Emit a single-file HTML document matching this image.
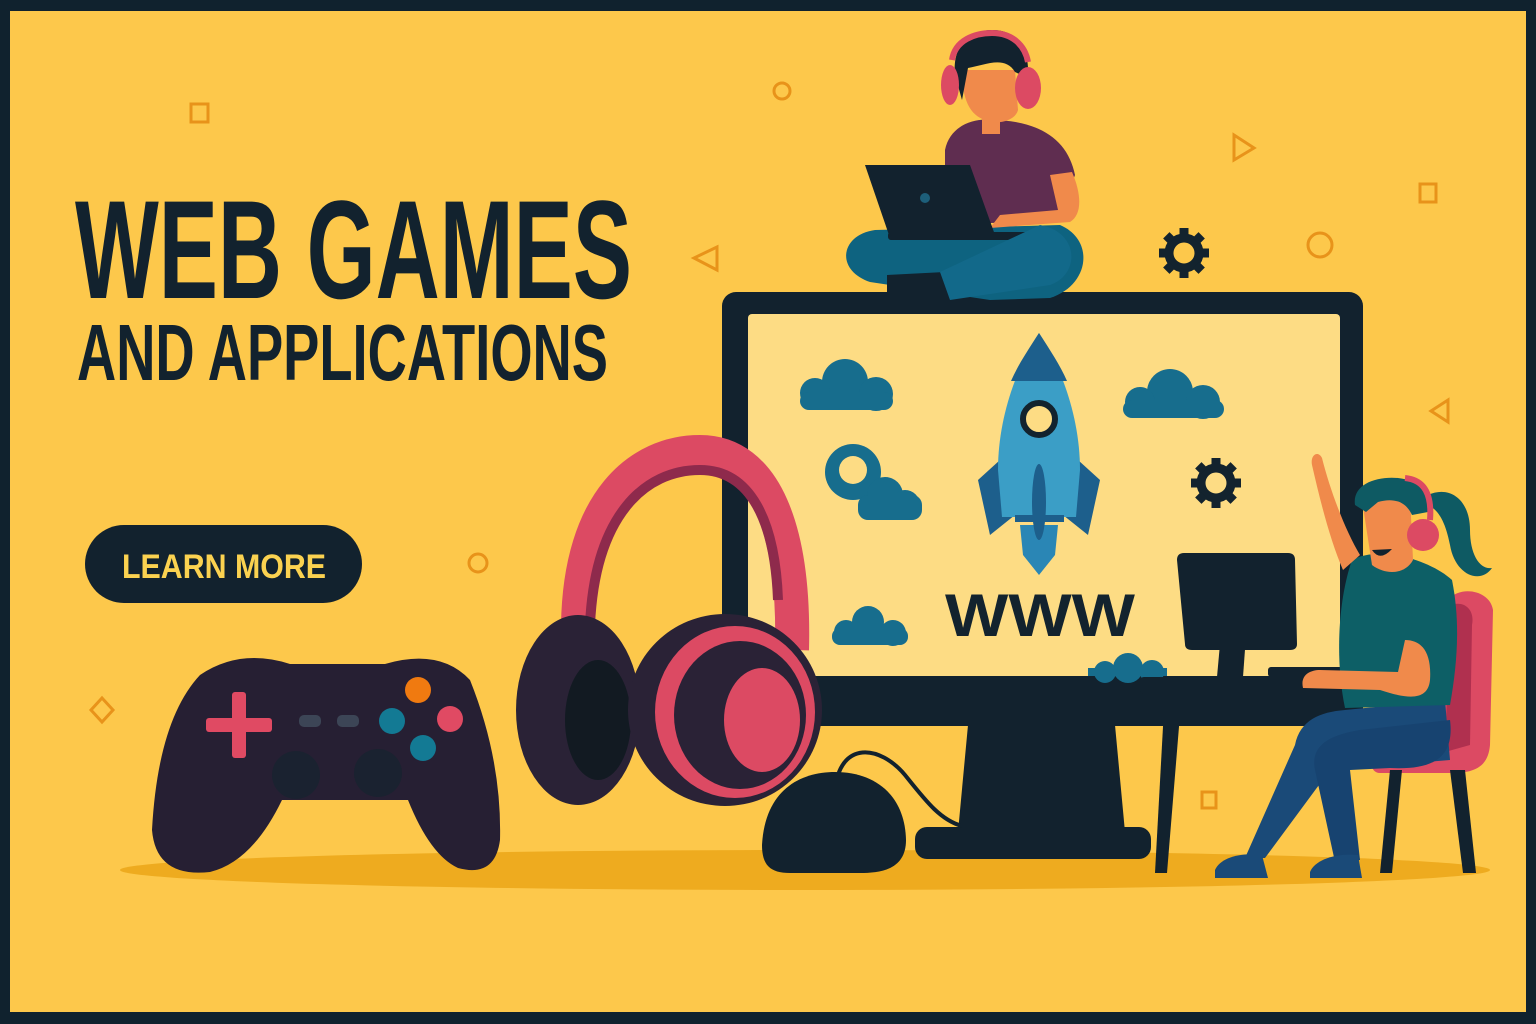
<!DOCTYPE html>
<html><head><meta charset="utf-8"><style>
html,body{margin:0;padding:0;width:1536px;height:1024px;overflow:hidden;background:#10222e}
svg{display:block}
</style></head><body>
<svg width="1536" height="1024" viewBox="0 0 1536 1024" xmlns="http://www.w3.org/2000/svg">
<defs>
<g id="gear">
<circle r="15" fill="none" stroke="#13232e" stroke-width="9"/>
<g fill="#13232e">
<rect x="-4.5" y="-25" width="9" height="8"/>
<rect x="-4.5" y="-25" width="9" height="8" transform="rotate(45)"/>
<rect x="-4.5" y="-25" width="9" height="8" transform="rotate(90)"/>
<rect x="-4.5" y="-25" width="9" height="8" transform="rotate(135)"/>
<rect x="-4.5" y="-25" width="9" height="8" transform="rotate(180)"/>
<rect x="-4.5" y="-25" width="9" height="8" transform="rotate(225)"/>
<rect x="-4.5" y="-25" width="9" height="8" transform="rotate(270)"/>
<rect x="-4.5" y="-25" width="9" height="8" transform="rotate(315)"/>
</g>
</g>
</defs>
<rect x="0" y="0" width="1536" height="1024" fill="#10222e"/>
<rect x="10" y="11" width="1516" height="1001" fill="#fdc84b"/>

<g fill="none" stroke="#e8931a" stroke-width="3">
<rect x="191" y="104" width="17" height="18"/>
<circle cx="782" cy="91" r="8"/>
<path d="M1234 135 L1254 148 L1234 160 Z"/>
<rect x="1420" y="184" width="16" height="18"/>
<circle cx="1320" cy="245" r="12"/>
<path d="M717 247 L694 258 L717 270 Z"/>
<path d="M1448 400 L1431 411 L1448 422 Z"/>
<circle cx="478" cy="563" r="9"/>
<path d="M102 698 L113 710 L102 722 L91 710 Z"/>
<rect x="1202" y="792" width="14" height="16"/>
</g>

<text x="75" y="298" font-family="Liberation Sans Narrow, Liberation Sans, sans-serif" font-weight="bold" font-size="140" fill="#12222e" textLength="557" lengthAdjust="spacingAndGlyphs">WEB GAMES</text>
<text x="77" y="380" font-family="Liberation Sans Narrow, Liberation Sans, sans-serif" font-weight="bold" font-size="80" fill="#12222e" textLength="531" lengthAdjust="spacingAndGlyphs">AND APPLICATIONS</text>

<rect x="85" y="525" width="277" height="78" rx="39" fill="#12222e"/>
<text x="122" y="578" font-family="Liberation Sans, sans-serif" font-weight="bold" font-size="34" fill="#fbd250" textLength="204" lengthAdjust="spacingAndGlyphs">LEARN MORE</text>

<ellipse cx="805" cy="870" rx="685" ry="20" fill="#eeab1f"/>

<rect x="722" y="292" width="641" height="434" rx="14" fill="#12222e"/>
<rect x="748" y="314" width="592" height="362" rx="4" fill="#fddc84"/>
<path d="M968 725 L1115 725 L1125 832 L958 832 Z" fill="#12222e"/>
<rect x="915" y="827" width="236" height="32" rx="12" fill="#12222e"/>

<g fill="#176d8d">
<circle cx="845" cy="382" r="23"/><circle cx="815" cy="393" r="15"/><circle cx="876" cy="394" r="17"/><rect x="800" y="392" width="93" height="18" rx="9"/>
<circle cx="1170" cy="392" r="23"/><circle cx="1140" cy="402" r="15"/><circle cx="1203" cy="402" r="17"/><rect x="1123" y="400" width="101" height="18" rx="9"/>
<circle cx="853" cy="472" r="28"/><circle cx="885" cy="495" r="18"/><circle cx="905" cy="505" r="15"/><rect x="858" y="495" width="64" height="25" rx="10"/>
<circle cx="868" cy="622" r="16"/><circle cx="846" cy="632" r="12"/><circle cx="893" cy="633" r="13"/><rect x="832" y="628" width="76" height="17" rx="8"/>
<circle cx="1128" cy="668" r="15"/><circle cx="1105" cy="672" r="11"/><circle cx="1152" cy="672" r="12"/><rect x="1088" y="668" width="79" height="8"/>
</g>
<circle cx="853" cy="470" r="14" fill="#fddc84"/>

<path d="M978 480 L1000 460 L1015 515 L990 535 Z" fill="#1d5f8c"/>
<path d="M1100 480 L1078 460 L1063 515 L1088 535 Z" fill="#1d5f8c"/>
<path d="M1020 525 L1058 525 L1055 555 L1039 575 L1023 555 Z" fill="#2a86b5"/>
<path d="M1039 333 C1015 370 998 420 998 470 L1002 517 L1076 517 L1080 470 C1080 420 1063 370 1039 333 Z" fill="#3b9ec6"/>
<path d="M1039 333 C1028 350 1018 365 1011 381 L1067 381 C1060 365 1050 350 1039 333 Z" fill="#1d5f8c"/>
<circle cx="1039" cy="419" r="16" fill="#fddc84" stroke="#13232e" stroke-width="6"/>
<ellipse cx="1039" cy="502" rx="7" ry="38" fill="#1d5f8c"/>
<rect x="1015" y="515" width="49" height="7" fill="#1d5f8c"/>

<text x="945" y="636" font-family="Liberation Sans, sans-serif" font-weight="bold" font-size="60" fill="#13232e" textLength="190" lengthAdjust="spacingAndGlyphs">WWW</text>

<use href="#gear" x="1184" y="253"/>
<use href="#gear" x="1216" y="483"/>

<path d="M835 790 C840 740 880 745 905 775 C925 800 940 820 962 826" fill="none" stroke="#12222e" stroke-width="4"/>
<path d="M762 845 C765 790 800 772 835 772 C875 772 905 795 906 840 C906 870 880 873 860 873 L790 873 C770 873 762 865 762 845 Z" fill="#12222e"/>

<path d="M200 675 Q240 648 290 664 L385 664 Q440 648 470 680 Q502 760 500 840 Q495 878 458 868 Q430 855 408 800 L282 800 Q252 862 210 872 Q156 878 152 830 Q158 720 200 675 Z" fill="#261f33"/>
<g fill="#e04a63"><rect x="206" y="718" width="66" height="14" rx="3"/><rect x="232" y="692" width="14" height="66" rx="3"/></g>
<rect x="299" y="715" width="22" height="12" rx="5" fill="#3c4556"/>
<rect x="337" y="715" width="22" height="12" rx="5" fill="#3c4556"/>
<circle cx="418" cy="690" r="13" fill="#f07a10"/>
<circle cx="392" cy="721" r="13" fill="#137a94"/>
<circle cx="450" cy="719" r="13" fill="#e04a63"/>
<circle cx="423" cy="748" r="13" fill="#137a94"/>
<circle cx="296" cy="775" r="24" fill="#1a2230"/>
<circle cx="378" cy="773" r="24" fill="#1a2230"/>

<path d="M578 625 C580 500 640 452 700 452 C765 452 795 530 792 650" fill="none" stroke="#dc4a63" stroke-width="34"/>
<path d="M590 625 C595 515 645 470 700 470 C750 470 775 520 778 600" fill="none" stroke="#8e2a4c" stroke-width="10"/>
<ellipse cx="578" cy="710" rx="62" ry="95" fill="#2a2236"/>
<ellipse cx="598" cy="720" rx="33" ry="60" fill="#121a22"/>
<ellipse cx="725" cy="710" rx="97" ry="96" fill="#2a2236"/>
<ellipse cx="735" cy="712" rx="80" ry="86" fill="#dc4a63"/>
<ellipse cx="740" cy="715" rx="66" ry="74" fill="#2a2236"/>
<ellipse cx="762" cy="720" rx="38" ry="52" fill="#dc4a63"/>

<path d="M875 230 C840 235 835 270 870 282 L990 300 L1050 298 C1090 285 1095 240 1060 225 Z" fill="#0e6380"/>
<path d="M887 275 L945 272 L950 300 L887 300 Z" fill="#12222e"/>
<path d="M945 150 C950 125 975 118 990 120 C1040 120 1068 140 1075 175 L1058 220 L945 225 Z" fill="#5f2d50"/>
<path d="M1050 175 L1072 172 C1082 195 1082 215 1070 222 L990 228 L1000 215 L1058 210 Z" fill="#f08a4b"/>
<rect x="982" y="108" width="18" height="26" fill="#f08a4b"/>
<path d="M962 70 L1015 70 L1018 110 C1015 122 995 125 985 120 C970 115 962 100 962 70 Z" fill="#f08a4b"/>
<path d="M955 75 C952 40 975 30 992 30 C1015 30 1030 45 1028 78 L1015 72 C1005 55 985 65 968 68 L962 100 Z" fill="#12222e"/>
<path d="M952 60 C955 40 975 33 992 33 C1012 33 1025 45 1028 62" fill="none" stroke="#dc4a63" stroke-width="6"/>
<ellipse cx="950" cy="85" rx="9" ry="20" fill="#dc4a63"/>
<ellipse cx="1028" cy="88" rx="13" ry="21" fill="#dc4a63"/>
<path d="M865 165 L970 165 L995 235 L890 238 Z" fill="#12222e"/>
<rect x="888" y="232" width="140" height="8" rx="3" fill="#12222e"/>
<circle cx="925" cy="198" r="5" fill="#1d5f7a"/>
<path d="M1040 225 C1080 232 1080 275 1050 285 L950 300 L940 272 Z" fill="#12698a"/>

<rect x="1140" y="677" width="222" height="17" rx="4" fill="#12222e"/>
<path d="M1165 690 L1182 690 L1167 873 L1155 873 Z" fill="#12222e"/>
<path d="M1177 560 Q1177 553 1184 553 L1288 553 Q1295 553 1295 560 L1297 644 Q1297 650 1290 650 L1192 650 Q1185 650 1185 644 Z" fill="#12222e"/>
<path d="M1222 622 L1247 622 L1243 677 L1217 677 Z" fill="#12222e"/>
<rect x="1268" y="667" width="82" height="10" rx="3" fill="#12222e"/>

<path d="M1448 600 C1460 585 1490 590 1493 610 L1490 745 C1488 770 1470 773 1450 773 L1380 773 C1368 773 1368 752 1385 752 L1440 752 Z" fill="#dc4a63"/>
<path d="M1450 605 C1465 600 1475 610 1472 625 L1470 745 L1445 752 Z" fill="#b0304f"/>
<path d="M1390 770 L1380 873 L1392 873 L1402 770 Z" fill="#12222e"/>
<path d="M1450 770 L1463 873 L1476 873 L1465 770 Z" fill="#12222e"/>
<path d="M1445 700 L1450 760 L1330 770 L1265 858 L1245 858 L1295 745 C1300 720 1320 712 1345 710 Z" fill="#1a4a78"/>
<path d="M1450 720 C1455 760 1430 770 1390 768 L1350 770 L1360 860 L1335 862 L1315 770 C1310 745 1330 735 1360 730 Z" fill="#174370"/>
<path d="M1215 870 C1220 858 1240 852 1262 855 L1268 878 L1215 878 Z" fill="#1a4a78"/>
<path d="M1310 872 C1315 860 1335 853 1358 855 L1362 878 L1310 878 Z" fill="#1a4a78"/>
<path d="M1352 560 C1380 545 1430 560 1452 580 C1460 620 1458 660 1450 705 L1345 708 C1335 660 1338 600 1352 560 Z" fill="#0d5f66"/>
<path d="M1405 640 C1420 640 1432 650 1430 680 C1428 700 1410 700 1380 690 L1303 688 C1300 675 1310 670 1320 670 L1398 672 Z" fill="#f08a4b"/>
<path d="M1343 570 C1330 540 1320 500 1312 465 C1310 455 1318 450 1322 458 C1330 490 1345 530 1360 555 Z" fill="#f08a4b"/>
<path d="M1362 500 L1410 495 L1413 560 C1405 575 1385 575 1372 565 Z" fill="#f08a4b"/>
<path d="M1372 550 Q1380 562 1392 549 Z" fill="#12222e"/>
<path d="M1355 505 C1352 485 1375 476 1398 478 C1418 480 1430 492 1428 512 L1412 515 C1405 500 1392 498 1378 502 L1366 512 Z" fill="#0e5a63"/>
<path d="M1428 495 C1450 485 1470 500 1470 530 C1470 555 1480 570 1492 568 C1480 585 1455 575 1450 545 C1445 520 1438 510 1428 505 Z" fill="#0e5a63"/>
<path d="M1405 478 C1425 480 1432 495 1430 520" fill="none" stroke="#dc4a63" stroke-width="6"/>
<circle cx="1423" cy="535" r="16" fill="#dc4a63"/>
</svg>
</body></html>
